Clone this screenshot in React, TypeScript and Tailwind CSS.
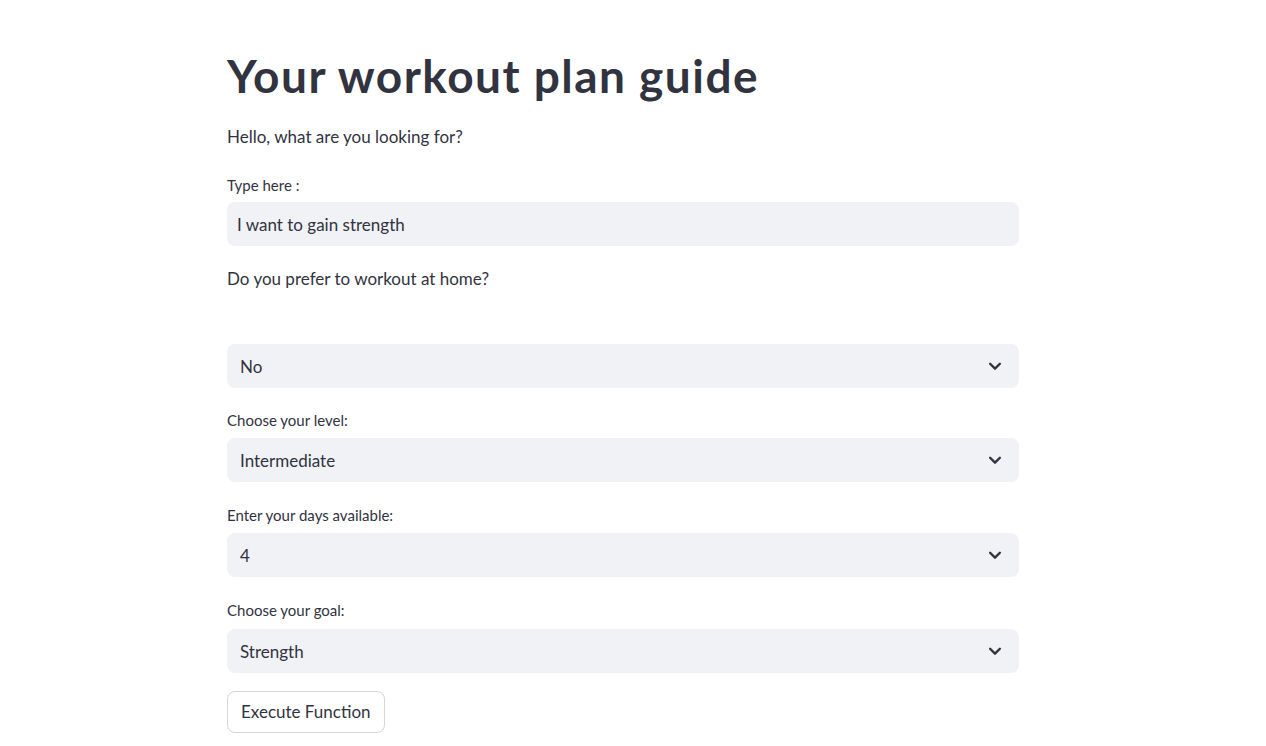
const font = "font-['Lato','Source_Sans_Pro',sans-serif]";

const Chevron = () => (
  <svg width="18" height="18" viewBox="0 0 24 24" fill="none" className="shrink-0">
    <path d="M5.5 9l6.5 6.5 6.5-6.5" stroke="#31333f" strokeWidth="3.2" strokeLinecap="round" strokeLinejoin="round" />
  </svg>
);

const Select = ({ value }: { value: string }) => (
  <div className="h-[44px] w-full rounded-lg bg-[#f0f2f6] flex flex-row items-center justify-between pl-[13px] pr-[15px]">
    <span className="pt-[2px] text-[17px] text-[#31333f]">{value}</span>
    <Chevron />
  </div>
);

const Label = ({ text }: { text: string }) => (
  <div className="h-5 flex items-center text-[15px] text-[#31333f]">{text}</div>
);

const App = () => {
  return (
    <div className={`min-h-[746px] bg-white ${font} text-[#31333f]`}>
      <main className="ml-[227px] w-[792px] pt-[48px] flex flex-col">
        <h1 className="text-[46px] leading-[56px] font-bold tracking-[0.032em]">Your workout plan guide</h1>
        <p className="mt-[21px] h-6 leading-6 text-[17px]">Hello, what are you looking for?</p>

        <div className="mt-[26px]">
          <Label text="Type here :" />
        </div>
        <div className="mt-[7px] h-[44px] rounded-lg bg-[#f0f2f6] flex items-center px-[10px] pt-[2px] text-[17px]">
          I want to gain strength
        </div>

        <p className="mt-[21px] h-6 leading-6 text-[17px]">Do you prefer to workout at home?</p>

        <div className="mt-[53px]">
          <Select value="No" />
        </div>

        <div className="mt-[22px]">
          <Label text="Choose your level:" />
        </div>
        <div className="mt-[8px]">
          <Select value="Intermediate" />
        </div>

        <div className="mt-[23px]">
          <Label text="Enter your days available:" />
        </div>
        <div className="mt-[8px]">
          <Select value="4" />
        </div>

        <div className="mt-[23px]">
          <Label text="Choose your goal:" />
        </div>
        <div className="mt-[9px]">
          <Select value="Strength" />
        </div>

        <div className="mt-[18px]">
          <button className="h-[42px] px-[13px] rounded-lg border border-[#d6d6d9] bg-white text-[17px] text-[#31333f]">
            Execute Function
          </button>
        </div>
      </main>
    </div>
  );
};

export default App;
